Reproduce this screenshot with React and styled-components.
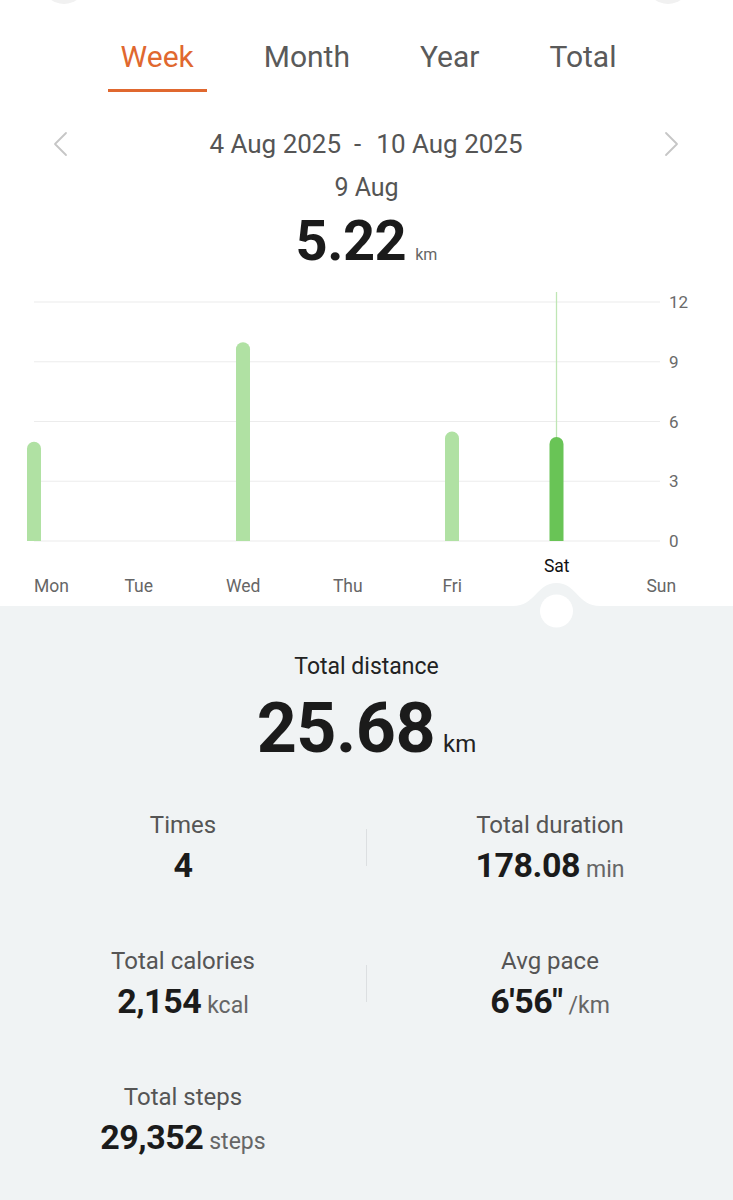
import React from "react";
import styled, { createGlobalStyle } from "styled-components";

const GlobalStyle = createGlobalStyle`
  body {
    margin: 0;
    background: #ffffff;
    font-family: Roboto, "Noto Sans", sans-serif;
  }
`;

const ORANGE = "#e0682f";
const BAR = "#b0e1a3";
const BAR_ACTIVE = "#69c456";
const GRAY_BG = "#f0f3f4";

// chart geometry
const PLOT_W = 668;
const PLOT_H = 262;
const X0 = 34;
const STEP = 104.5;
const GRID_TOP = 12;
const GRID_BOTTOM = 251;
const MAX = 12;
const BAR_W = 14;

const days = [
  { name: "Mon", value: 4.98 },
  { name: "Tue", value: 0 },
  { name: "Wed", value: 9.98 },
  { name: "Thu", value: 0 },
  { name: "Fri", value: 5.5 },
  { name: "Sat", value: 5.22 },
  { name: "Sun", value: 0 },
];
const SELECTED = 5;

const Page = styled.div`
  width: 733px;
  overflow: hidden;
`;

const TopBar = styled.div`
  display: flex;
  justify-content: space-between;
  height: 4px;
  padding: 0 43px 0 42px;
`;

const RoundButton = styled.div`
  width: 44px;
  height: 44px;
  margin-top: -40px;
  border-radius: 50%;
  background: #f1f1f1;
`;

const Tabs = styled.nav`
  display: flex;
  justify-content: center;
  gap: 44px;
  margin-top: 33px;
  padding-left: 4px;
`;

const Tab = styled.div`
  padding: 0 13px 12px;
  font-size: 30px;
  line-height: 40px;
  color: ${(p) => (p.$active ? ORANGE : "#5a5a5a")};
  border-bottom: 3px solid ${(p) => (p.$active ? ORANGE : "transparent")};
`;

const DateRow = styled.div`
  display: flex;
  align-items: center;
  justify-content: space-between;
  margin-top: 37px;
  padding: 0 53px 0 52px;
`;

const DateText = styled.div`
  font-size: 26px;
  line-height: 30px;
  color: #555;
`;

const Dash = styled.span`
  margin: 0 15px 0 13px;
`;

const DayTitle = styled.div`
  margin-top: 14px;
  text-align: center;
  font-size: 25px;
  line-height: 30px;
  color: #555;
`;

const DayValue = styled.div`
  margin-top: 8px;
  text-align: center;
  line-height: 60px;
  height: 60px;
`;

const BigNum = styled.span`
  font-size: ${(p) => p.$size}px;
  font-weight: 700;
  color: #1b1b1b;
  letter-spacing: -0.5px;
`;

const Unit = styled.span`
  margin-left: ${(p) => p.$gap || 6}px;
  font-size: ${(p) => p.$size}px;
  color: ${(p) => p.$color || "#666"};
`;

const ChartRow = styled.div`
  display: flex;
  margin-top: 19px;
  height: ${PLOT_H}px;
`;

const Axis = styled.div`
  display: flex;
  flex-direction: column;
  justify-content: space-between;
  padding: 1px 0 0 1px;
  font-size: 17px;
  line-height: 22px;
  color: #6a6a6a;
`;

const DayRow = styled.div`
  display: flex;
  align-items: flex-end;
  margin: 3px 0 9px -18px;
`;

const DayLabel = styled.div`
  flex: 0 0 ${STEP}px;
  font-size: 17.5px;
  line-height: 22px;
  text-align: ${(p) => (p.$lead ? "left" : "center")};
  padding-left: ${(p) => (p.$lead ? "52px" : "0")};
  padding-bottom: ${(p) => (p.$active ? "20px" : "0")};
  color: ${(p) => (p.$active ? "#111" : "#666")};
  box-sizing: border-box;
`;

const Stats = styled.section`
  position: relative;
  background: ${GRAY_BG};
  padding: 47px 0 60px;
`;

const Notch = styled.svg`
  position: absolute;
  top: -23px;
  left: 513px;
`;

const TotalLabel = styled.div`
  text-align: center;
  font-size: 23px;
  line-height: 28px;
  color: #222;
`;

const TotalValue = styled.div`
  margin-top: 9px;
  text-align: center;
  line-height: 76px;
  height: 76px;
`;

const Grid = styled.div`
  display: flex;
  flex-direction: column;
  gap: 61px;
  margin-top: 44px;
`;

const Row = styled.div`
  display: grid;
  grid-template-columns: 1fr 1px 1fr;
  align-items: center;
`;

const Divider = styled.div`
  width: 1px;
  height: 37px;
  background: ${(p) => (p.$show ? "#dcdfe1" : "transparent")};
`;

const Cell = styled.div`
  display: flex;
  flex-direction: column;
  align-items: center;
  gap: 5px;
`;

const CellLabel = styled.div`
  font-size: 24px;
  line-height: 30px;
  color: #555;
`;

const CellValue = styled.div`
  line-height: 40px;
  height: 40px;
  white-space: nowrap;
`;

const Chevron = ({ dir }) => (
  <svg width="16" height="26" viewBox="0 0 16 26">
    <polyline
      points={dir === "left" ? "14,2 3,13 14,24" : "2,2 13,13 2,24"}
      fill="none"
      stroke="#c6c6c6"
      strokeWidth="1.8"
      strokeLinecap="round"
      strokeLinejoin="round"
    />
  </svg>
);

const BarChart = () => {
  const unit = (GRID_BOTTOM - GRID_TOP) / MAX;
  const lines = [0, 3, 6, 9, 12];
  return (
    <svg width={PLOT_W} height={PLOT_H}>
      {lines.map((v) => {
        const y = GRID_BOTTOM - v * unit;
        return (
          <line key={v} x1={X0} x2={660} y1={y} y2={y} stroke="#ececec" strokeWidth="1.2" />
        );
      })}
      {days.map((d, i) => {
        if (!d.value) return null;
        const cx = X0 + STEP * i;
        const top = GRID_BOTTOM - d.value * unit;
        const r = BAR_W / 2;
        const path = `M${cx - r} ${GRID_BOTTOM} L${cx - r} ${top + r} A${r} ${r} 0 0 1 ${cx + r} ${top + r} L${cx + r} ${GRID_BOTTOM} Z`;
        return (
          <g key={d.name}>
            {i === SELECTED && (
              <line x1={cx} x2={cx} y1={2} y2={top + 2} stroke="#bfe6b5" strokeWidth="1.3" />
            )}
            <path d={path} fill={i === SELECTED ? BAR_ACTIVE : BAR} />
          </g>
        );
      })}
    </svg>
  );
};

const Stat = ({ label, value, unit }) => (
  <Cell>
    <CellLabel>{label}</CellLabel>
    <CellValue>
      <BigNum $size={34}>{value}</BigNum>
      {unit && <Unit $size={23}>{unit}</Unit>}
    </CellValue>
  </Cell>
);

const App = () => {
  return (
    <Page>
      <GlobalStyle />
      <TopBar>
        <RoundButton />
        <RoundButton />
      </TopBar>

      <Tabs>
        {["Week", "Month", "Year", "Total"].map((t, i) => (
          <Tab key={t} $active={i === 0}>
            {t}
          </Tab>
        ))}
      </Tabs>

      <DateRow>
        <Chevron dir="left" />
        <DateText>
          4 Aug 2025<Dash>-</Dash>10 Aug 2025
        </DateText>
        <Chevron dir="right" />
      </DateRow>

      <DayTitle>9 Aug</DayTitle>
      <DayValue>
        <BigNum $size={56}>5.22</BigNum>
        <Unit $size={16} $gap={9}>km</Unit>
      </DayValue>

      <ChartRow>
        <BarChart />
        <Axis>
          {["12", "9", "6", "3", "0"].map((l) => (
            <span key={l}>{l}</span>
          ))}
        </Axis>
      </ChartRow>

      <DayRow>
        {days.map((d, i) => (
          <DayLabel key={d.name} $lead={i === 0} $active={i === SELECTED}>
            {d.name}
          </DayLabel>
        ))}
      </DayRow>

      <Stats>
        <Notch width="87" height="45" viewBox="0 0 87 45">
          <path d="M0 23 C22 23 24 0 43.5 0 C63 0 65 23 87 23 L87 45 L0 45 Z" fill={GRAY_BG} />
          <circle cx="43.5" cy="28" r="16.5" fill="#ffffff" />
        </Notch>

        <TotalLabel>Total distance</TotalLabel>
        <TotalValue>
          <BigNum $size={70}>25.68</BigNum>
          <Unit $size={24} $color="#222" $gap={8}>km</Unit>
        </TotalValue>

        <Grid>
          <Row>
            <Stat label="Times" value="4" />
            <Divider $show />
            <Stat label="Total duration" value="178.08" unit="min" />
          </Row>
          <Row>
            <Stat label="Total calories" value="2,154" unit="kcal" />
            <Divider $show />
            <Stat label="Avg pace" value={"6'56\""} unit="/km" />
          </Row>
          <Row>
            <Stat label="Total steps" value="29,352" unit="steps" />
            <Divider />
            <div />
          </Row>
        </Grid>
      </Stats>
    </Page>
  );
};

export default App;
